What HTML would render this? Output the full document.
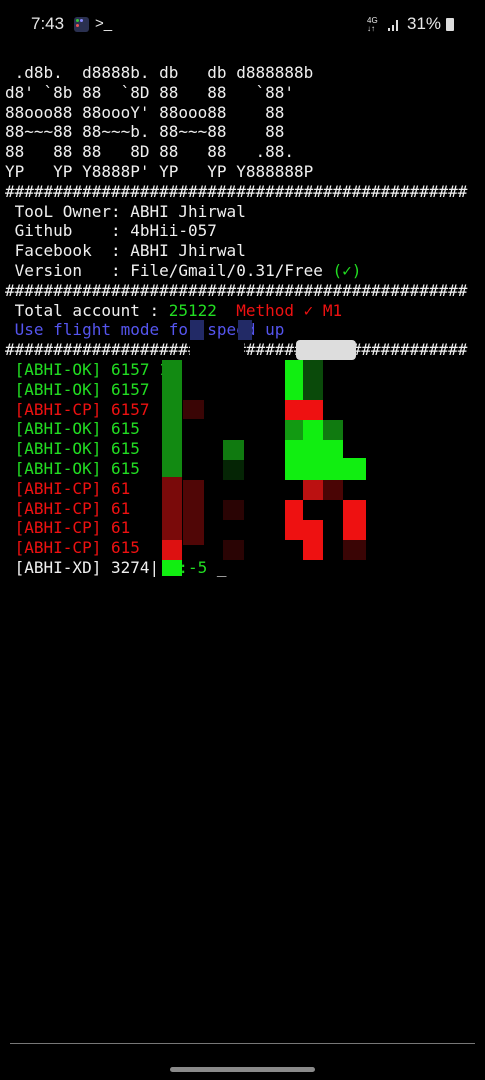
<!DOCTYPE html>
<html><head><meta charset="utf-8"><style>
html,body{margin:0;padding:0;background:#000;}
body{width:485px;height:1080px;position:relative;overflow:hidden;font-family:"DejaVu Sans Mono","Liberation Mono",monospace;}
.t{position:absolute;left:5px;top:63px;font-size:16px;line-height:19.8px;color:#f0f0f0;white-space:pre;margin:0;}
.g{color:#22dd22}.r{color:#ee1111}.b{color:#5555ee}.w{color:#f0f0f0}
.blk{position:absolute}
.sb{position:absolute;top:14px;color:#e8e8e8;font-family:"Liberation Sans",sans-serif;font-size:17px;}
</style></head><body>
<div class="sb" style="left:31px;">7:43</div>
<div class="blk" style="left:74px;top:17px;width:15px;height:15px;background:#2a3050;border-radius:3px;"></div>
<div class="blk" style="left:76px;top:19px;width:3px;height:3px;background:#3c3;border-radius:2px"></div>
<div class="blk" style="left:80px;top:19px;width:3px;height:3px;background:#88f;border-radius:2px"></div>
<div class="blk" style="left:76px;top:24px;width:3px;height:3px;background:#e55;border-radius:2px"></div>
<div class="sb" style="left:95px;font-size:15px;top:15px">&gt;_</div>
<div class="sb" style="left:367px;font-size:8px;top:17px;line-height:8px">4G<br>↓↑</div>
<div class="blk" style="left:388px;top:28px;width:2px;height:3px;background:#ddd"></div>
<div class="blk" style="left:392px;top:25px;width:2px;height:6px;background:#ddd"></div>
<div class="blk" style="left:396px;top:20px;width:2px;height:11px;background:#ddd"></div>
<div class="sb" style="left:407px;">31%</div>
<div class="blk" style="left:446px;top:18px;width:8px;height:13px;background:#ddd;border-radius:1px"></div>

<pre class="t"> .d8b.  d8888b. db   db d888888b
d8' `8b 88  `8D 88   88   `88'
88ooo88 88oooY' 88ooo88    88
88~~~88 88~~~b. 88~~~88    88
88   88 88   8D 88   88   .88.
YP   YP Y8888P' YP   YP Y888888P
################################################
 TooL Owner: ABHI Jhirwal
 Github    : 4bHii-057
 Facebook  : ABHI Jhirwal
 Version   : File/Gmail/0.31/Free <span class="g">(✓)</span>
################################################
 Total account : <span class="g">25122</span>  <span class="r">Method ✓ M1</span>
<span class="b"> Use flight mode for speed up</span>
################################################
<span class="g"> [ABHI-OK] 6157 15 9</span>
<span class="g"> [ABHI-OK] 6157</span>
<span class="r"> [ABHI-CP] 6157</span>
<span class="g"> [ABHI-OK] 615</span>
<span class="g"> [ABHI-OK] 615</span>
<span class="g"> [ABHI-OK] 615</span>
<span class="r"> [ABHI-CP] 61</span>
<span class="r"> [ABHI-CP] 61</span>
<span class="r"> [ABHI-CP] 61</span>
<span class="r"> [ABHI-CP] 615</span>
 [ABHI-XD] 3274|<span class="g">  :-5</span> _</pre>

<div class="blk" style="left:190px;top:320px;width:14px;height:20px;background:#222a66"></div>
<div class="blk" style="left:238px;top:320px;width:14px;height:20px;background:#222a66"></div>
<div class="blk" style="left:190px;top:340px;width:54px;height:20px;background:#000"></div>
<div class="blk" style="left:296px;top:340px;width:60px;height:20px;background:#ddd;border-radius:4px"></div>
<div class="blk" style="left:162px;top:360px;width:20px;height:117px;background:#128a12"></div>
<div class="blk" style="left:182px;top:360px;width:42px;height:198px;background:#000"></div>
<div class="blk" style="left:183px;top:400px;width:21px;height:19px;background:#3a0505"></div>
<div class="blk" style="left:162px;top:477px;width:20px;height:63px;background:#7a0a0a"></div>
<div class="blk" style="left:183px;top:480px;width:21px;height:65px;background:#500606"></div>
<div class="blk" style="left:162px;top:540px;width:20px;height:20px;background:#dd1111"></div>
<div class="blk" style="left:162px;top:560px;width:20px;height:16px;background:#11ee11"></div>
<div class="blk" style="left:223px;top:440px;width:21px;height:20px;background:#107a10"></div>
<div class="blk" style="left:223px;top:460px;width:21px;height:20px;background:#052505"></div>
<div class="blk" style="left:223px;top:500px;width:21px;height:20px;background:#2a0404"></div>
<div class="blk" style="left:223px;top:540px;width:21px;height:20px;background:#2a0404"></div>
<div class="blk" style="left:285px;top:360px;width:18px;height:40px;background:#11ee11"></div>
<div class="blk" style="left:303px;top:360px;width:20px;height:40px;background:#0a4a0a"></div>
<div class="blk" style="left:285px;top:400px;width:38px;height:20px;background:#ee1111"></div>
<div class="blk" style="left:285px;top:420px;width:18px;height:20px;background:#129a12"></div>
<div class="blk" style="left:303px;top:420px;width:20px;height:60px;background:#11ee11"></div>
<div class="blk" style="left:323px;top:420px;width:20px;height:20px;background:#107a10"></div>
<div class="blk" style="left:285px;top:440px;width:58px;height:40px;background:#11ee11"></div>
<div class="blk" style="left:343px;top:458px;width:23px;height:22px;background:#11ee11"></div>
<div class="blk" style="left:303px;top:480px;width:20px;height:20px;background:#bb1111"></div>
<div class="blk" style="left:323px;top:480px;width:20px;height:20px;background:#4a0505"></div>
<div class="blk" style="left:285px;top:500px;width:18px;height:40px;background:#ee1111"></div>
<div class="blk" style="left:303px;top:520px;width:20px;height:40px;background:#ee1111"></div>
<div class="blk" style="left:343px;top:500px;width:23px;height:40px;background:#ee1111"></div>
<div class="blk" style="left:343px;top:540px;width:23px;height:20px;background:#3a0505"></div>

<div class="blk" style="left:10px;top:1043px;width:465px;height:1px;background:#777"></div>
<div class="blk" style="left:170px;top:1067px;width:145px;height:5px;background:#8a8a8a;border-radius:3px"></div>
</body></html>
